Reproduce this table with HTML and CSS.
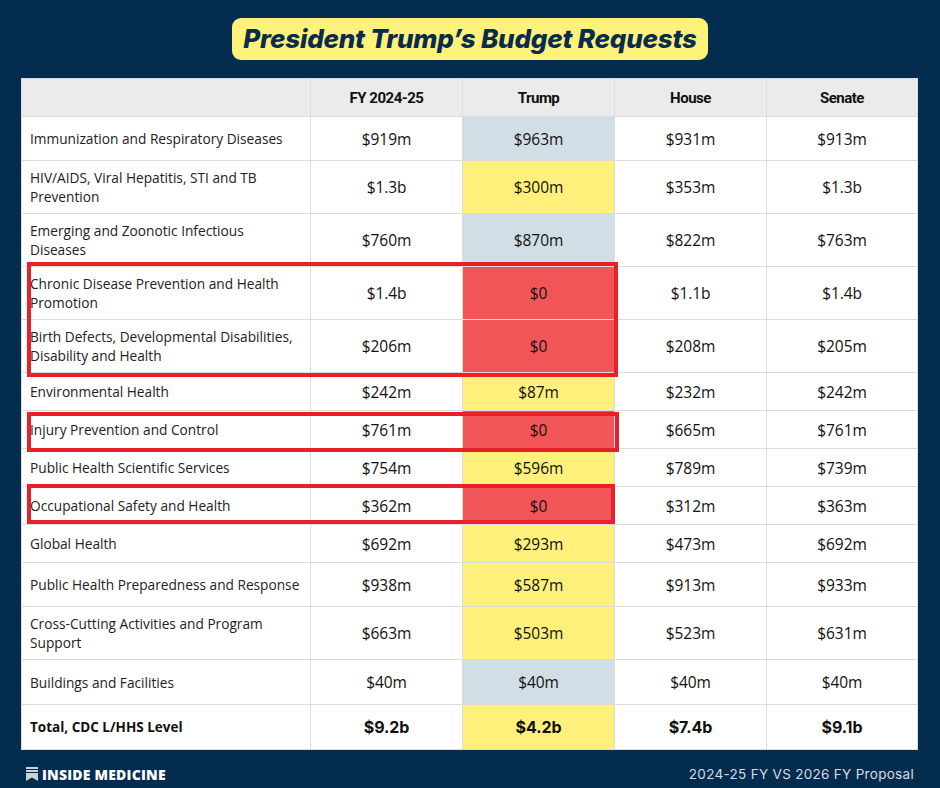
FILE: index.html
```html
<!DOCTYPE html>
<html>
<head>
<meta charset="utf-8">
<link rel="stylesheet" href="styles.css">
</head>
<body>
<div class="page">
  <div class="title-row"><h1 class="title">President Trump’s Budget Requests</h1></div>
  <div class="table-wrap">
    <table class="budget">
      <colgroup>
        <col class="c-label"><col class="c-num"><col class="c-num"><col class="c-num"><col class="c-num5">
      </colgroup>
      <thead>
        <tr class="h38"><th></th><th>FY 2024-25</th><th>Trump</th><th>House</th><th>Senate</th></tr>
      </thead>
      <tbody>
        <tr class="h44"><td class="lbl">Immunization and Respiratory Diseases</td><td>$919m</td><td class="blue">$963m</td><td>$931m</td><td>$913m</td></tr>
        <tr class="h53"><td class="lbl">HIV/AIDS, Viral Hepatitis, STI and TB Prevention</td><td>$1.3b</td><td class="yel">$300m</td><td>$353m</td><td>$1.3b</td></tr>
        <tr class="h53"><td class="lbl">Emerging and Zoonotic Infectious Diseases</td><td>$760m</td><td class="blue">$870m</td><td>$822m</td><td>$763m</td></tr>
        <tr class="h53"><td class="lbl">Chronic Disease Prevention and Health Promotion</td><td>$1.4b</td><td class="red">$0</td><td>$1.1b</td><td>$1.4b</td></tr>
        <tr class="h53"><td class="lbl">Birth Defects, Developmental Disabilities, Disability and Health</td><td>$206m</td><td class="red">$0</td><td>$208m</td><td>$205m</td></tr>
        <tr class="h38"><td class="lbl">Environmental Health</td><td>$242m</td><td class="yel">$87m</td><td>$232m</td><td>$242m</td></tr>
        <tr class="h38"><td class="lbl">Injury Prevention and Control</td><td>$761m</td><td class="red">$0</td><td>$665m</td><td>$761m</td></tr>
        <tr class="h38"><td class="lbl">Public Health Scientific Services</td><td>$754m</td><td class="yel">$596m</td><td>$789m</td><td>$739m</td></tr>
        <tr class="h38"><td class="lbl">Occupational Safety and Health</td><td>$362m</td><td class="red">$0</td><td>$312m</td><td>$363m</td></tr>
        <tr class="h38"><td class="lbl">Global Health</td><td>$692m</td><td class="yel">$293m</td><td>$473m</td><td>$692m</td></tr>
        <tr class="h44"><td class="lbl">Public Health Preparedness and Response</td><td>$938m</td><td class="yel">$587m</td><td>$913m</td><td>$933m</td></tr>
        <tr class="h53"><td class="lbl">Cross-Cutting Activities and Program Support</td><td>$663m</td><td class="yel">$503m</td><td>$523m</td><td>$631m</td></tr>
        <tr class="h45"><td class="lbl">Buildings and Facilities</td><td>$40m</td><td class="blue">$40m</td><td>$40m</td><td>$40m</td></tr>
        <tr class="h45 total"><td class="lbl">Total, CDC L/HHS Level</td><td>$9.2b</td><td class="yel">$4.2b</td><td>$7.4b</td><td>$9.1b</td></tr>
      </tbody>
    </table>
    <div class="hl hl-1"></div>
    <div class="hl hl-2"></div>
    <div class="hl hl-3"></div>
  </div>
  <div class="footer">
    <div class="brand">
      <svg class="brand-icon" width="12" height="14" viewBox="0 0 12 14" aria-hidden="true">
        <rect x="0" y="0" width="12" height="2" fill="#c9d1db"/>
        <rect x="0" y="3" width="12" height="2" fill="#c9d1db"/>
        <path d="M0 6 H12 V14 L6 10.5 L0 14 Z" fill="#c9d1db"/>
      </svg>
      <span>INSIDE MEDICINE</span>
    </div>
    <div class="caption">2024-25 FY VS 2026 FY Proposal</div>
  </div>
</div>
</body>
</html>
```

FILE: styles.css
```css
html, body {
  margin: 0;
  padding: 0;
}
body {
  background: #042c4e;
  width: 940px;
  height: 788px;
  overflow: hidden;
}
.page {
  width: 940px;
  height: 788px;
  display: flex;
  flex-direction: column;
}
.title-row {
  display: flex;
  justify-content: center;
  padding-top: 18px;
  height: 60px;
  box-sizing: border-box;
}
.title {
  margin: 0;
  height: 42px;
  box-sizing: border-box;
  padding: 0 11px;
  width: 476px;
  white-space: nowrap;
  background: #fef27a;
  border-radius: 9px;
  font-family: Inter, "Liberation Sans", sans-serif;
  font-weight: 800;
  font-style: italic;
  font-size: 26px;
  line-height: 42px;
  color: #0a2b4d;
  text-align: center;
  letter-spacing: -0.2px;
}
.table-wrap {
  position: relative;
  margin: 18px 0 0 21px;
  width: 896px;
}
.budget {
  width: 896px;
  border-collapse: collapse;
  table-layout: fixed;
  background: #fff;
}
.c-label { width: 289px; }
.c-num { width: 152px; }
.c-num5 { width: 151px; }
.budget th, .budget td {
  border: 1px solid #dcdcdc;
  padding: 0;
  text-align: center;
  vertical-align: middle;
  color: #111;
}
.budget th {
  background: #ebebeb;
  font-family: "Roboto", "Liberation Sans", sans-serif;
  font-weight: 700;
  font-size: 15px;
  letter-spacing: -0.5px;
  color: #111;
}
.budget td {
  font-family: "Open Sans", "Liberation Sans", sans-serif;
  font-size: 15.5px;
  letter-spacing: -0.1px;
}
.budget td.lbl {
  text-align: left;
  padding: 0 10px 0 8px;
  font-family: "Open Sans", "Noto Sans", sans-serif;
  font-size: 13.7px;
  line-height: 19px;
  color: #222;
  letter-spacing: 0;
}
.budget td.blue { background: #d2dee6; }
.budget td.yel { background: #fef07a; }
.budget td.red { background: #f25557; }
.h38 { height: 38px; }
.h44 { height: 44px; }
.h45 { height: 45px; }
.h53 { height: 53px; }
.budget tr.total td {
  font-weight: 700;
  font-family: Inter, "Liberation Sans", sans-serif;
  font-size: 16px;
}
.budget tr.total td.lbl {
  font-family: "Open Sans", sans-serif;
  font-size: 13.5px;
  font-weight: 700;
  color: #111;
}
.hl {
  position: absolute;
  border: 4px solid #e8202a;
  box-sizing: border-box;
  pointer-events: none;
}
.hl-1 { left: 6px; top: 184px; width: 591px; height: 115px; }
.hl-2 { left: 6px; top: 334px; width: 592px; height: 40px; }
.hl-3 { left: 6px; top: 406px; width: 588px; height: 40px; }
.footer {
  display: flex;
  justify-content: space-between;
  align-items: center;
  padding: 10px 26px 0 26px;
  height: 28px;
}
.brand {
  display: flex;
  align-items: center;
  gap: 4px;
  font-family: "Open Sans", "Liberation Sans", sans-serif;
  font-weight: 800;
  font-size: 14px;
  color: #ffffff;
  letter-spacing: 0.2px;
}
.brand-icon { display: block; }
.caption {
  font-family: Inter, "Liberation Sans", sans-serif;
  font-size: 13.5px;
  color: #d6dce4;
  letter-spacing: 0.3px;
}
```
